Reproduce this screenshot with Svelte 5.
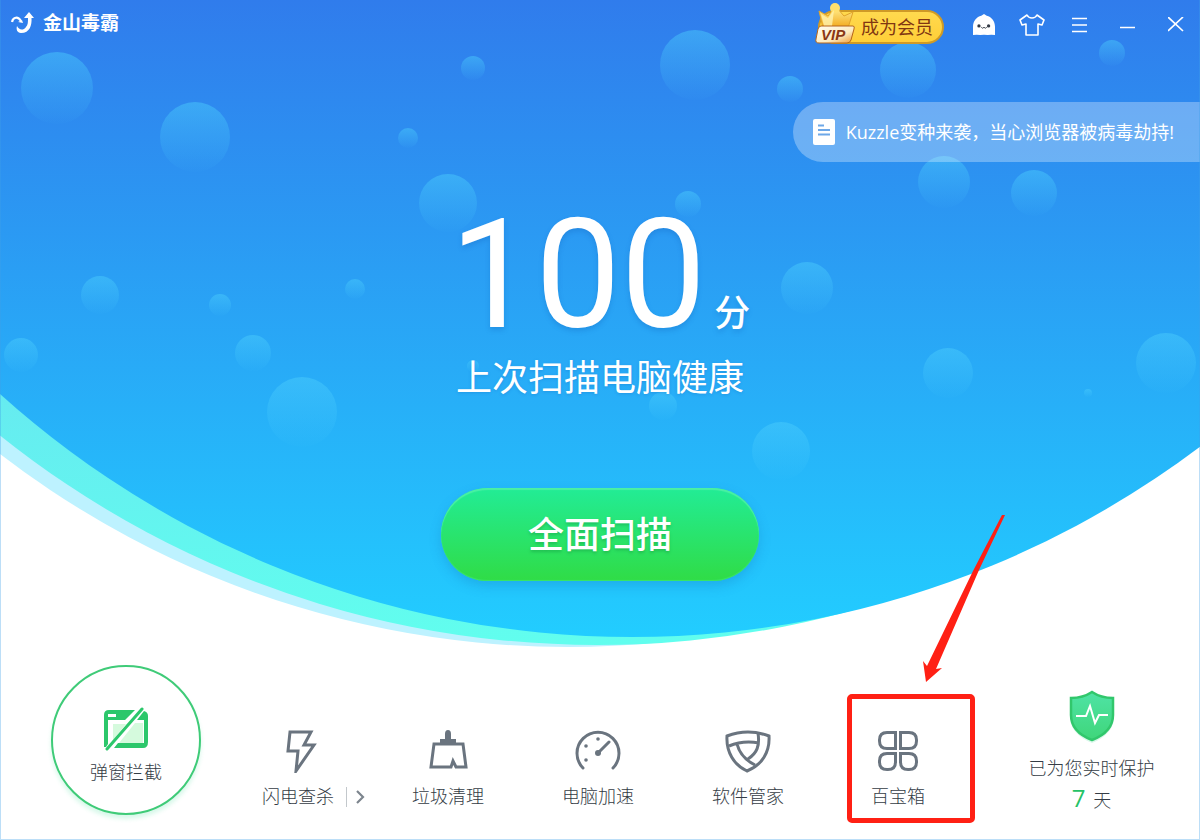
<script>
  const bubbles = [
    [57, 88, 36], [195, 137, 35], [473, 68, 12], [695, 65, 35], [408, 138, 10],
    [448, 203, 29], [790, 89, 13], [908, 70, 28], [1112, 53, 13], [944, 182, 26],
    [1034, 193, 23], [688, 204, 13], [807, 288, 26], [100, 295, 19], [220, 305, 11],
    [355, 289, 10], [21, 355, 17], [253, 353, 18], [302, 412, 35], [948, 373, 25],
    [1166, 363, 30], [1088, 393, 4], [663, 406, 14], [781, 451, 29], [473, 366, 6]
  ];

  const tools = [
    { id: 'flash', label: '闪电查杀', more: true },
    { id: 'clean', label: '垃圾清理' },
    { id: 'speed', label: '电脑加速' },
    { id: 'apps', label: '软件管家' },
    { id: 'box', label: '百宝箱', marked: true }
  ];

  let score = $state(100);
  let days = $state(7);
</script>

<div class="window">
  <svg class="backdrop" viewBox="0 0 1200 840" preserveAspectRatio="xMidYMin slice" aria-hidden="true">
    <defs>
      <linearGradient id="sky" gradientUnits="userSpaceOnUse" x1="0" y1="0" x2="0" y2="637">
        <stop offset="0" stop-color="#307cec" />
        <stop offset="1" stop-color="#22cdff" />
      </linearGradient>
      <linearGradient id="mint" gradientUnits="userSpaceOnUse" x1="0" y1="394" x2="0" y2="645">
        <stop offset="0" stop-color="#66ebf0" />
        <stop offset="1" stop-color="#61feee" />
      </linearGradient>
      <linearGradient id="bubble" x1="0" y1="0" x2="0" y2="1">
        <stop offset="0" stop-color="#4bcdfc" stop-opacity="0.48" />
        <stop offset="1" stop-color="#4bcdfc" stop-opacity="0.02" />
      </linearGradient>
    </defs>
    <circle cx="568" cy="-285" r="932" fill="#bdf2ff" />
    <circle cx="597" cy="-310" r="955" fill="url(#mint)" />
    <circle cx="632" cy="-306" r="943" fill="url(#sky)" />
    {#each bubbles as [cx, cy, r]}
      <circle {cx} {cy} {r} fill="url(#bubble)" />
    {/each}
  </svg>

  <header class="titlebar">
    <div class="brand">
      <svg width="24" height="22" viewBox="0 0 24 22" aria-hidden="true">
        <path d="M1 10C2 5 7 4 10 9" fill="none" stroke="#fff" stroke-width="2.200" />
        <path d="M7 10l4-2 1 3z" fill="#fff" />
        <path d="M17 6h-4l5-6 5 6h-2.500C21 13 19 21 10 21 6 21 5 17 6 14 8 18 12 19 15 15 17 13 17 10 17 6z" fill="#fff" />
      </svg>
      <span>金山毒霸</span>
    </div>
    <a class="vip" href="#vip">
      <svg class="crown" width="42" height="42" viewBox="0 0 42 42" aria-hidden="true">
        <defs>
          <linearGradient id="gold" x1="0" y1="0" x2="0" y2="1">
            <stop offset="0" stop-color="#ffec8c" />
            <stop offset="1" stop-color="#f2a81a" />
          </linearGradient>
          <linearGradient id="plate" x1="0" y1="0" x2="1" y2="1">
            <stop offset="0" stop-color="#fffdf2" />
            <stop offset="0.6" stop-color="#fdebc0" />
            <stop offset="1" stop-color="#f0972c" />
          </linearGradient>
        </defs>
        <path d="M8 26L4 9l9 5 6-8h3l7 8 9-4-5 16z" fill="url(#gold)" stroke="#e0a32a" />
        <circle cx="20" cy="6" r="5" fill="#ffe06e" />
        <path d="M9 24L6 12l7 4 6-8-2 16z" fill="#fff2ae" opacity="0.8" />
        <path d="M6 24h32q2 0 1 3l-3 11q-1 3-4 3H4q-4 0-3-4l2-10q1-3 3-3z" fill="url(#plate)" stroke="#b5651a" />
        <text x="6" y="38" font-family="Liberation Sans, sans-serif" font-size="15" font-weight="700" font-style="italic" fill="#8a3715">VIP</text>
      </svg>
      成为会员
    </a>
    <button class="tool" aria-label="客服">
      <svg width="24" height="22" viewBox="0 0 26 24">
        <path d="M1 23V14C1 8 5 3 10 2l3-2 3 2c5 1 9 6 9 12v9l-4-.5-4 .5-4-.5-4 .5-4-.5z" fill="#fff" />
        <circle cx="7.500" cy="13" r="1.800" fill="#333a44" />
        <circle cx="18" cy="13" r="1.800" fill="#333a44" />
        <path d="M10 14.500q1.500 2 3 0 1.500 2 3 0" fill="none" stroke="#333a44" />
      </svg>
    </button>
    <button class="tool" aria-label="换肤">
      <svg width="26" height="22" viewBox="0 0 26 22">
        <path d="M8 1L1 6l2 5 4-1v11h12V10l4 1 2-5-7-5c-2 4-8 4-10 0z" fill="none" stroke="#fff" stroke-width="1.600" stroke-linejoin="round" />
      </svg>
    </button>
    <button class="tool" aria-label="菜单">
      <svg width="16" height="16" viewBox="0 0 16 16"><path d="M0 1.500h15M0 8h15M0 14.500h15" stroke="#fff" stroke-width="1.500" /></svg>
    </button>
    <button class="tool" aria-label="最小化">
      <svg width="16" height="16" viewBox="0 0 16 16"><path d="M0 10.500h15" stroke="#fff" stroke-width="1.500" /></svg>
    </button>
    <button class="tool" aria-label="关闭">
      <svg width="16" height="16" viewBox="0 0 16 16"><path d="M0 0l15 14M15 0L0 14" stroke="#fff" stroke-width="1.700" /></svg>
    </button>
  </header>

  <a class="news" href="#news">
    <svg width="22" height="26" viewBox="0 0 22 26" aria-hidden="true">
      <rect width="22" height="26" rx="2" fill="#fff" />
      <path d="M5 6.500h6M5 11h12M5 15.500h12" stroke="#6ea8e8" stroke-width="1.800" />
    </svg>
    Kuzzle变种来袭，当心浏览器被病毒劫持!
  </a>

  <main>
    <div class="score"><strong>{score}</strong><span>分</span></div>
    <p class="summary">上次扫描电脑健康</p>
    <button class="scan">全面扫描</button>
  </main>

  <nav>
    <button class="popup">
      <svg width="46" height="44" viewBox="0 0 46 44" aria-hidden="true">
        <path d="M1 40V8q0-5 5-5h26L22 13H5v24l-2 3z" fill="#2cc76b" />
        <path d="M5 7h8v3H5z" fill="#fff" />
        <path d="M10 17h13L10 33z" fill="#d5fadd" />
        <path d="M41 4q4 1 4 5v26q0 6-5 6H11l4-5h26V13h-7z" fill="#2cc76b" />
        <path d="M32 16h8v20H16z" fill="#d5fadd" />
        <path d="M4 42L39 2" stroke="#2cc76b" stroke-width="3" stroke-linecap="round" />
      </svg>
      弹窗拦截
    </button>

    {#each tools as tool (tool.id)}
      <div class="entry">
        <button class="item">
          <svg class="icon" width="46" height="44" viewBox="0 0 46 44" aria-hidden="true">
            {#if tool.id === 'flash'}
              <path d="M15 3h21l-7 13h10L21 42l2-20H13z" />
            {:else if tool.id === 'clean'}
              <path d="M9 15h29l3 23H31l-3-6-2 6H6z" />
              <path d="M15 10h5V5q0-4 3-4t3 4v5h5v4H15z" class="solid" />
            {:else if tool.id === 'speed'}
              <path d="M8 39A21 21 0 1 1 38 39M23 24L34 13" stroke-linecap="round" />
              <circle cx="23" cy="24" r="3" class="solid" />
              <circle cx="11" cy="31" r="1.800" class="solid" />
              <circle cx="11" cy="17" r="1.800" class="solid" />
              <circle cx="23" cy="10" r="1.800" class="solid" />
            {:else if tool.id === 'apps'}
              <path d="M2 7Q23-1 44 7C45 23 37 36 22 42 9 36 1 23 2 7z" />
              <path d="M4 17Q18 11 34 14M33 4C35 17 32 24 23 30M12 15C14 23 20 31 30 36" />
            {:else}
              <path d="M12 3.500h8.500v16H12q-7.500 0-7.500-7.500v-1q0-7.500 7.500-7.500zM25.500 3.500H34q7.500 0 7.500 7.500v1q0 7.500-7.500 7.500h-8.500zM12 24.500h8.500V33q0 7.500-7.500 7.500h-1q-7.500 0-7.500-7.500v-1q0-7.500 7.500-7.500zM25.500 24.500H34q7.500 0 7.500 7.500v1q0 7.500-7.500 7.500h-1q-7.500 0-7.500-7.500z" />
            {/if}
          </svg>
          {tool.label}
        </button>
        {#if tool.more}
          <button class="more" aria-label="更多">
            <svg width="9" height="14" viewBox="0 0 9 14"><path d="M1 1l6 6-6 6" fill="none" stroke="#7d858e" stroke-width="2.200" /></svg>
          </button>
        {/if}
        {#if tool.marked}
          <span class="mark"></span>
          <svg class="arrow" width="84" height="170" viewBox="0 0 84 170" aria-hidden="true">
            <path d="M80 1h3L57 56 14 155l6-1L4 168 1 147l4 5L51 57z" fill="#ff2014" />
          </svg>
        {/if}
      </div>
    {/each}

    <div class="guard">
      <svg width="50" height="54" viewBox="0 0 50 54" aria-hidden="true">
        <defs>
          <linearGradient id="shield" x1="0" y1="0" x2="0" y2="1">
            <stop offset="0" stop-color="#4fe3a5" />
            <stop offset="1" stop-color="#3fd67a" />
          </linearGradient>
        </defs>
        <path d="M25 5l22 7v17q-2 16-22 24Q5 45 3 29V12z" fill="#d9f8ea" />
        <path d="M25 2Q34 8 46 8v17q0 17-21 25Q4 42 4 25V8Q16 8 25 2z" fill="url(#shield)" stroke="#31c76c" stroke-width="2.500" />
        <path d="M9 26h10l4-10 5 17 4-8h9" fill="none" stroke="#fff" stroke-width="2" />
      </svg>
      <p>已为您实时保护</p>
      <p class="days"><b>{days}</b> 天</p>
    </div>
  </nav>
</div>

<style>
  :global(body) { margin: 0; background: #fff; }
  .window {
    position: relative;
    display: flex; flex-direction: column;
    min-height: 100vh;
    overflow: hidden;
    font: 300 18px/24px "Open Sans", "Noto Sans CJK SC", sans-serif;
    color: #343c45;
  }
  .window::after {
    content: ""; position: absolute; inset: 0;
    border: 1px solid rgba(64, 160, 232, 0.35); border-top: none;
    pointer-events: none;
  }
  .backdrop { position: absolute; inset: 0; width: 100%; height: 100%; }
  .titlebar, .news, main, nav { position: relative; }
  button {
    background: none; border: none; padding: 0;
    font: inherit; color: inherit; cursor: pointer;
  }
  a { text-decoration: none; }
  svg { display: block; flex: none; }

  .titlebar { display: flex; align-items: center; height: 50px; }
  .brand {
    display: flex; align-items: center; gap: 8px;
    padding: 0 0 4px 11px; margin-right: auto;
    font-size: 19px; font-weight: 700; color: #fff;
  }
  .vip {
    position: relative;
    box-sizing: border-box;
    height: 34px; margin: 4px 16px 0 0; padding: 0 9px 0 41px;
    border: 2px solid #cf9a26; border-radius: 17px;
    background: linear-gradient(#ffd94e, #ffcf38);
    line-height: 30px; font-weight: 400; color: #813612;
  }
  .crown { position: absolute; left: -5px; bottom: -2px; }
  .tool {
    display: flex; align-items: center; justify-content: center;
    width: 48px; height: 50px;
  }

  .news {
    align-self: flex-end;
    display: flex; align-items: center; gap: 11px;
    height: 60px; margin-top: 52px; padding: 0 26px 0 20px;
    border-radius: 30px 0 0 30px;
    background: rgba(255, 255, 255, 0.3);
    color: #fff; font-weight: 400;
  }

  main {
    display: flex; flex-direction: column; align-items: center;
    color: #fff;
  }
  .score {
    display: flex; align-items: flex-end; gap: 8px;
    margin-top: 51px;
    text-shadow: 0 3px 5px rgba(20, 100, 190, 0.3);
  }
  .score strong { font: 400 152px/124px Roboto, "Liberation Sans", sans-serif; }
  .score span { font-size: 36px; line-height: 48px; font-weight: 500; }
  .summary {
    margin: 21px 0 0;
    font-size: 36px; line-height: 40px; font-weight: 400;
    text-shadow: 0 1px 3px rgba(20, 100, 190, 0.3);
  }
  .scan {
    width: 318px; height: 93px; margin-top: 90px;
    border-radius: 47px;
    background: linear-gradient(#22ec96, #30dc46);
    box-shadow: inset 0 2px 1px #4bf0a4, inset 0 -1px 1px #39e66a, 0 5px 12px rgba(20, 120, 190, 0.3);
    font-size: 36px; font-weight: 500;
    text-shadow: 0 2px 3px rgba(20, 140, 60, 0.4);
  }

  nav {
    display: grid;
    grid-template-columns: 223fr repeat(5, 150fr) 227fr;
    align-items: end;
    margin-top: auto; padding-bottom: 25px;
  }
  .popup {
    display: flex; flex-direction: column; align-items: center; gap: 9px;
    box-sizing: border-box;
    width: 150px; height: 150px; margin-left: 51px; padding-top: 40px;
    border: 2px solid #3fcb78; border-radius: 50%;
    background: #fff;
    box-shadow: 0 4px 4px rgba(60, 220, 150, 0.2);
  }
  .entry { position: relative; display: flex; justify-content: center; padding-bottom: 7px; }
  .item { display: flex; flex-direction: column; align-items: center; gap: 11px; }
  .icon { fill: none; stroke: #6a747f; stroke-width: 3; }
  .icon .solid { fill: #6a747f; stroke: none; }
  .more {
    position: absolute; left: 123px; bottom: 8px;
    display: flex; align-items: center;
    height: 20px; padding-left: 9px;
    border-left: 1px solid #c3c8cc;
  }
  .mark {
    position: absolute; left: 50%; bottom: -8px;
    box-sizing: border-box;
    width: 128px; height: 129px; margin-left: -51px;
    border: 5px solid #ff2014; border-radius: 5px;
    pointer-events: none;
  }
  .arrow { position: absolute; left: 50%; bottom: 131px; margin-left: 24px; pointer-events: none; }
  .guard {
    display: flex; flex-direction: column; align-items: center;
    padding: 0 2px 3px 12px;
  }
  .guard p { margin: 12px 0 0; }
  .guard .days { margin-top: 6px; }
  .days b { font-size: 24px; font-weight: 400; color: #25c266; margin-right: 3px; }
</style>
